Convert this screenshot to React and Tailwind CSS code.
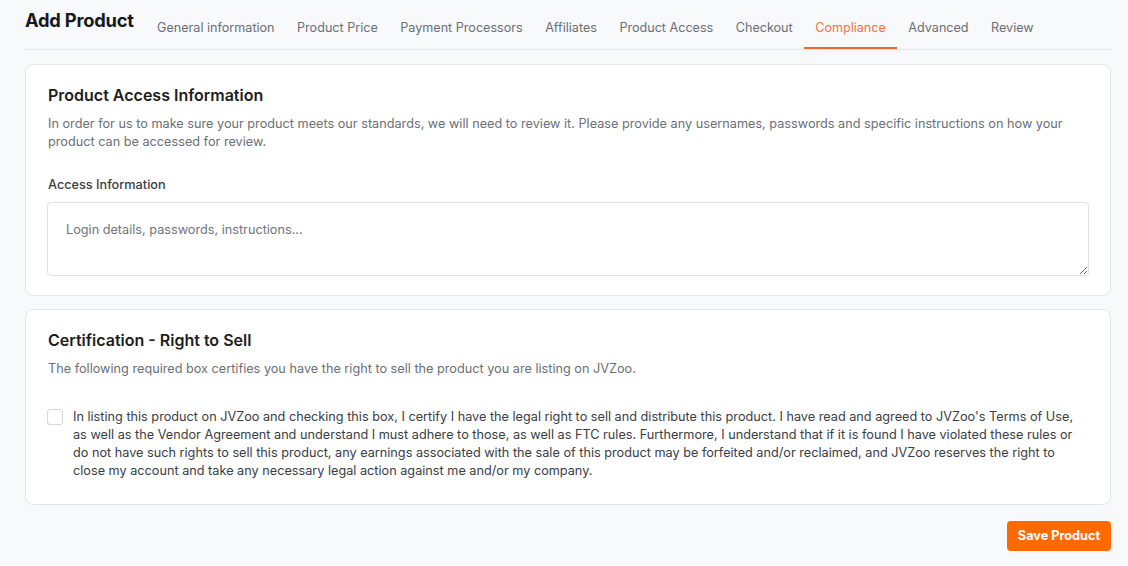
import { useState } from 'react';

const tabs = [
  'General information',
  'Product Price',
  'Payment Processors',
  'Affiliates',
  'Product Access',
  'Checkout',
  'Compliance',
  'Advanced',
  'Review',
];

export default function App() {
  const [active, setActive] = useState('Compliance');
  const [agreed, setAgreed] = useState(false);

  return (
    <div
      className="min-h-[566px] bg-[#f8f9fb] pl-[25px] pr-[17px] pb-4 text-[#1f2328]"
      style={{ fontFamily: 'Inter, "Noto Sans", sans-serif' }}
    >
      {/* header + tabs */}
      <div className="mr-[-1px] flex items-start border-b border-[#e3e5e9]">
        <h1 className="mt-[6px] text-[18.3px] font-bold leading-[28px] tracking-[-0.2px] text-[#16181d]">
          Add Product
        </h1>
        <nav className="ml-[12px] flex">
          {tabs.map((t) => (
            <button
              key={t}
              type="button"
              onClick={() => setActive(t)}
              className={`border-b-2 px-[11.25px] pt-[19px] pb-[10px] text-[12.6px] leading-[18px] ${
                active === t
                  ? 'border-[#ea6a2e] text-[#ee7440]'
                  : 'border-transparent text-[#6b6f76]'
              }`}
            >
              {t}
            </button>
          ))}
        </nav>
      </div>

      {/* product access */}
      <section className="mt-[14px] rounded-lg border border-[#e3e5e9] bg-white px-[21px] pt-[18px] pb-[19px]">
        <h2 className="pl-px text-[16px] font-semibold leading-[24px] text-[#1b1d22]">
          Product Access Information
        </h2>
        <p className="mt-[8px] pl-px text-[12.7px] leading-[17.5px] text-[#6b6f76]">
          In order for us to make sure your product meets our standards, we will need to review it. Please provide any
          usernames, passwords and specific instructions on how your product can be accessed for review.
        </p>
        <label className="mt-[26px] block pl-px text-[12.7px] font-medium leading-[18px] text-[#3a3d44]">
          Access Information
        </label>
        <textarea
          placeholder="Login details, passwords, instructions..."
          className="mt-[8px] block h-[74px] w-full rounded border border-[#dfe1e5] px-[18px] py-[18px] text-[12.7px] leading-[18px] text-[#3a3d44] placeholder:text-[#70747b] focus:outline-none"
        />
      </section>

      {/* certification */}
      <section className="mt-[13px] rounded-lg border border-[#e3e5e9] bg-white px-[21px] pt-[18px] pb-[24px]">
        <h2 className="pl-px text-[16px] font-semibold leading-[24px] text-[#1b1d22]">
          Certification - Right to Sell
        </h2>
        <p className="mt-[8px] pl-px text-[12.7px] leading-[18px] text-[#6b6f76]">
          The following required box certifies you have the right to sell the product you are listing on JVZoo.
        </p>
        <label className="mt-[30px] flex items-start gap-[10px]">
          <input
            type="checkbox"
            checked={agreed}
            onChange={(e) => setAgreed(e.target.checked)}
            className="mt-px h-4 w-4 shrink-0 appearance-none rounded-[3px] border border-[#d4d6db] bg-white checked:border-[#ff6a00] checked:bg-[#ff6a00]"
          />
          <span className="pr-[12px] text-[12.7px] leading-[18px] text-[#3a3d44]">
            In listing this product on JVZoo and checking this box, I certify I have the legal right to sell and
            distribute this product. I have read and agreed to JVZoo's Terms of Use, as well as the Vendor Agreement
            and understand I must adhere to those, as well as FTC rules. Furthermore, I understand that if it is found
            I have violated these rules or do not have such rights to sell this product, any earnings associated with
            the sale of this product may be forfeited and/or reclaimed, and JVZoo reserves the right to close my
            account and take any necessary legal action against me and/or my company.
          </span>
        </label>
      </section>

      <div className="mt-[16px] flex justify-end">
        <button
          type="button"
          className="h-[30px] w-[104px] rounded bg-[#ff6a00] text-[12.7px] font-bold text-white"
        >
          Save Product
        </button>
      </div>
    </div>
  );
}
